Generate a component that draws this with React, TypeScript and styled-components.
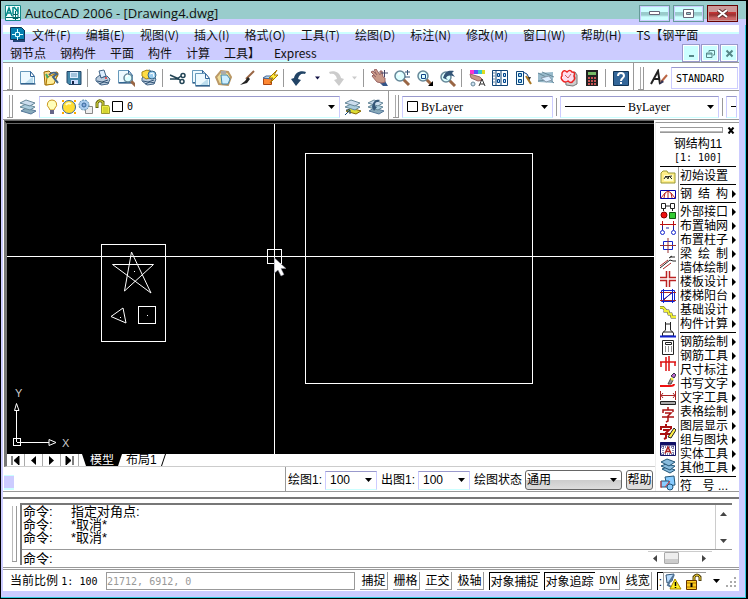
import React from 'react';
import styled, { createGlobalStyle } from 'styled-components';

const UI = "'Open Sans', 'Noto Sans CJK SC', sans-serif";
const SONG = "'Liberation Sans', 'Noto Sans CJK SC', sans-serif";
const FIXED = "'DejaVu Sans Mono', 'Noto Sans CJK SC', monospace";

const GlobalStyle = createGlobalStyle`
  * { box-sizing: border-box; }
  body { margin: 0; background: #000; overflow: hidden; }
  button, select, input { margin: 0; padding: 0; font: inherit; color: inherit; border: 0; background: none; border-radius: 0; }
  svg { display: block; flex: none; }
`;

/* ---------- window frame ---------- */
const Frame = styled.div`
  display: flex;
  flex-direction: column;
  height: 100vh;
  border: 1px solid #000;
  border-right-width: 2px;
  background: #ccccff;
  box-shadow: inset -1px -1px 0 #33ccdd;
  font: 12px/14px ${SONG};
  color: #000;
`;
const TitleBar = styled.header`
  display: flex;
  align-items: center;
  gap: 4px;
  height: 24px;
  flex: none;
  padding: 0 8px 0 4px;
  background: linear-gradient(#99cccc 18px, #ccccff 18px);
`;
const TitleText = styled.h1`
  flex: 1;
  margin: 0;
  font: 400 13px/18px ${UI};
  color: #111;
`;
const WindowButtons = styled.div`
  display: flex;
  gap: 3px;
`;
const WindowButton = styled.button<{ $close?: boolean }>`
  display: flex;
  align-items: center;
  justify-content: center;
  width: 31px;
  height: 17px;
  border: 1px solid ${p => (p.$close ? '#660000' : '#669999')};
  background: ${p => p.$close
    ? 'linear-gradient(#cc9999 6px, #cc3333 6px, #993333 9px, #cc6666 12px)'
    : 'linear-gradient(#ccffff 6px, #99cccc 6px, #99cccc 9px, #ccffff 11px)'};
  box-shadow: inset 0 0 0 1px ${p => (p.$close ? '#cc9999' : '#ccccff')};
`;
const Content = styled.main`
  display: flex;
  flex-direction: column;
  flex: 1;
  min-height: 0;
  margin: 0 7px 7px 2px;
  background: #fff;
`;

/* ---------- menu ---------- */
const MenuArea = styled.nav`
  flex: none;
  padding: 1px 0 0 7px;
  background: linear-gradient(#fff 7px, #ccffff 7px, #ccffff 9px, #ccccff 9px, #ccccff 35px, #ccffff 35px);
  border-bottom: 1px solid #999;
  font: 12px/18px 'Noto Sans CJK SC', sans-serif;
  color: #111;
`;
const MenuRow = styled.div<{ $wide?: boolean }>`
  display: flex;
  align-items: center;
  gap: ${p => (p.$wide ? '15px' : '14px')};
  height: 18px;
  white-space: nowrap;
`;
const MenuButton = styled.button<{ $first?: boolean }>`
  flex: none;
  margin-left: ${p => (p.$first ? '-9px' : '0')};
`;
const MdiButtons = styled.div`
  display: flex;
  gap: 1px;
  margin-left: auto;
  padding-right: 1px;
`;
const MdiButton = styled.button`
  display: flex;
  align-items: center;
  justify-content: center;
  width: 18px;
  height: 18px;
  border: 1px solid #9999cc;
  box-shadow: inset 0 0 0 1px #fff;
  background: #ccffff;
`;

/* ---------- toolbars ---------- */
const ToolbarRow = styled.div<{ $short?: boolean }>`
  display: flex;
  flex: none;
  height: ${p => (p.$short ? '28px' : '29px')};
  overflow: hidden;
  font: 10px/14px ${FIXED};
`;
const Toolbar = styled.div<{ $grow?: boolean }>`
  display: flex;
  align-items: center;
  flex: ${p => (p.$grow ? '1 1 0' : 'none')};
  min-width: 0;
  padding: 3px 1px 0 3px;
  border-right: ${p => (p.$grow ? '0' : '1px solid #999')};
  border-bottom: 1px solid #999;
`;
const Grip = styled.span`
  flex: none;
  width: 6px;
  height: 23px;
  margin: 0 3px 0 1px;
  border: solid #999;
  border-width: 0 1px 1px 0;
  background: linear-gradient(90deg, transparent 2px, #aaa 2px, #aaa 3px, transparent 3px);
`;
const ToolButton = styled.button<{ $narrow?: boolean }>`
  display: flex;
  align-items: center;
  justify-content: center;
  flex: none;
  width: ${p => (p.$narrow ? '14px' : '23px')};
  height: 22px;
`;
const Separator = styled.span`
  flex: none;
  width: 1px;
  height: 18px;
  margin: 0 3px 0 2px;
  background: #999;
`;
const Combo = styled.label<{ $width?: number }>`
  display: flex;
  align-items: center;
  position: relative;
  flex: ${p => (p.$width ? `0 0 ${p.$width}px` : '1 1 0')};
  min-width: 0;
  height: 22px;
  padding-left: 4px;
  margin: 0 1px 0 0;
  gap: 3px;
  border: 1px solid #ccccff;
  border-top-color: #9999cc;
  border-bottom-color: #ccffff;
  overflow: hidden;
`;
const SmallCombo = styled(Combo)`
  height: 19px;
  font: 12px/16px ${SONG};
`;
const PlainSelect = styled.select<{ $serif?: boolean }>`
  appearance: none;
  flex: 1;
  min-width: 0;
  outline: 0;
  ${p => (p.$serif ? "font: 12px/16px 'Liberation Serif', serif;" : '')}
`;
const Caret = styled.svg`
  position: absolute;
  right: 4px;
  pointer-events: none;
`;
const StyleInput = styled.input`
  flex: 1 1 0;
  min-width: 0;
  height: 22px;
  margin-left: 1px;
  padding-left: 4px;
  border: 1px solid #ccccff;
  border-top-color: #9999cc;
`;
const LayerButton = styled.button`
  display: flex;
  align-items: center;
  gap: 1px;
  flex: 1;
  text-align: left;
`;
const LayerName = styled.span`
  margin-left: 3px;
`;

/* ---------- work area ---------- */
const WorkArea = styled.section`
  display: grid;
  grid-template-columns: 1fr 84px;
  flex: 1;
  min-height: 0;
  border-bottom: 1px solid #999;
`;
const DrawingColumn = styled.div`
  display: flex;
  flex-direction: column;
  min-width: 0;
  min-height: 0;
`;
const Viewport = styled.div`
  position: relative;
  flex: 1;
  min-height: 0;
  margin: 0 1px 0 1px;
  border-top: 4px double #666;
  border-left: 3px solid #777;
  background: #000;
  overflow: hidden;
`;
const UcsIcon = styled.svg`
  position: absolute;
  left: 0;
  bottom: 0;
`;
const TabStrip = styled.div`
  display: flex;
  flex: none;
  height: 13px;
  margin-left: 1px;
  border-left: 3px solid #777;
  border-bottom: 1px solid #ccc;
  overflow: hidden;
`;
const TabNav = styled.button`
  display: flex;
  align-items: center;
  justify-content: center;
  width: 18px;
  border-right: 1px solid #aaa;
`;
const SheetTab = styled.button<{ $active?: boolean }>`
  height: 12px;
  margin-left: ${p => (p.$active ? '3px' : '0')};
  padding: 0 ${p => (p.$active ? '8px' : '4px')};
  line-height: 12px;
  color: ${p => (p.$active ? '#fff' : '#000')};
  background: ${p => (p.$active ? '#000' : 'none')};
  clip-path: ${p => (p.$active ? 'polygon(0 0, 100% 0, calc(100% - 4px) 100%, 4px 100%)' : 'none')};
`;
const DrawBar = styled.div`
  display: flex;
  justify-content: space-between;
  flex: none;
  height: 24px;
`;
const ScrollStub = styled.span`
  width: 10px;
  height: 15px;
  margin: 8px 0 0 1px;
  background: #ccccff;
  border: solid #ccffff;
  border-width: 1px 0 2px;
`;
const ScaleControls = styled.div`
  display: flex;
  align-items: center;
  gap: 3px;
  padding: 2px 2px 0 2px;
  border-left: 1px solid #999;
  white-space: nowrap;
`;
const ModeCombo = styled(Combo)`
  height: 20px;
  padding-left: 1px;
  border: 1px solid #666;
  border-radius: 3px;
  background: linear-gradient(#fff 9px, #ccc 9px, #ddd);
  font: 12px/16px ${SONG};
`;
const HelpButton = styled.button`
  height: 20px;
  width: 27px;
  border: 1px solid #666;
  border-radius: 3px;
  background: linear-gradient(#fff 9px, #ddd 9px);
`;

/* ---------- side panel ---------- */
const SidePanel = styled.aside`
  display: flex;
  flex-direction: column;
  min-height: 0;
  margin-top: 2px;
  padding: 0 3px 0 4px;
  border-top: 1px solid #999;
  border-left: 1px solid #eee;
  overflow: hidden;
`;
const PanelGrip = styled.div`
  display: flex;
  align-items: center;
  gap: 4px;
  height: 14px;
  flex: none;
`;
const GripLines = styled.span`
  flex: 1;
  height: 6px;
  border: solid #999;
  border-width: 1px 1px 1px 0;
  background: linear-gradient(transparent 3px, #bbb 3px);
`;
const PanelTitle = styled.div`
  flex: none;
  height: 30px;
  text-align: center;
  line-height: 14px;
  border-bottom: 1px solid #000;
`;
const PanelScale = styled.div`
  font: 10px/14px ${FIXED};
`;
const PanelBody = styled.div`
  display: grid;
  grid-template-columns: 18px 1fr;
  flex: 1;
  min-height: 0;
`;
const IconStrip = styled.div`
  display: flex;
  flex-direction: column;
  gap: 1px;
  padding-top: 2px;
`;
const StripButton = styled.button`
  flex: none;
  width: 16px;
  height: 16px;
`;
const PanelMenu = styled.div`
  border-left: 1px solid #999;
  padding-left: 1px;
  padding-top: 2px;
`;
const PanelItem = styled.button`
  display: flex;
  align-items: center;
  justify-content: space-between;
  width: 100%;
  height: 14px;
  line-height: 14px;
`;
const PanelLabel = styled.span`
  width: 48px;
  text-align: justify;
  text-align-last: justify;
  white-space: nowrap;
`;
const PanelRule = styled.div`
  height: 1px;
  margin: 1px 0 2px;
  background: #000;
`;

/* ---------- command window ---------- */
const CommandArea = styled.section`
  display: flex;
  flex: none;
  height: 71px;
  margin-top: 5px;
  padding: 4px 7px 0 9px;
  border-top: 2px solid #777;
  border-bottom: 1px solid #999;
`;
const CommandGrip = styled.span`
  width: 5px;
  height: 56px;
  margin: 3px 3px 0 0;
  border: solid #999;
  border-width: 0 1px 1px 0;
  background: linear-gradient(90deg, #bbb 1px, transparent 1px);
`;
const CommandBox = styled.div`
  display: flex;
  flex-direction: column;
  flex: 1;
  height: 62px;
  border-top: 2px solid #777;
  border-left: 2px solid #777;
  font: 13px/13px ${SONG};
`;
const CommandLog = styled.div`
  display: flex;
  justify-content: space-between;
  flex: none;
  height: 45px;
  border-bottom: 1px solid #999;
`;
const LogLines = styled.div`
  padding-left: 1px;
`;
const CommandLine = styled.div`
  display: grid;
  grid-template-columns: 48px 1fr;
  height: 13px;
`;
const VerticalScroll = styled.div`
  display: flex;
  flex-direction: column;
  justify-content: space-between;
  width: 17px;
  padding: 7px 0 6px 4px;
  border-left: 1px solid #ccc;
`;
const CommandEntry = styled.label`
  display: flex;
  padding: 2px 0 0 1px;
`;
const CommandInput = styled.input`
  flex: 1;
  min-width: 0;
  height: 13px;
  outline: 0;
`;
const HorizontalScroll = styled.div`
  display: flex;
  align-items: center;
  gap: 7px;
  width: 64px;
  height: 13px;
  margin: -1px 20px 0 0;
  padding-left: 5px;
  border-top: 1px solid #ccc;
`;
const ScrollThumb = styled.span`
  width: 15px;
  height: 12px;
  margin-right: 16px;
  border: 1px solid #aaa;
  border-radius: 1px;
  background: linear-gradient(#eee 6px, #ccc 6px);
`;

/* ---------- status bar ---------- */
const StatusBar = styled.footer`
  display: flex;
  align-items: center;
  flex: none;
  height: 22px;
  margin-top: 1px;
  padding: 1px 1px 0 7px;
  border-top: 1px solid #999;
  white-space: nowrap;
`;
const ScaleText = styled.span`
  width: 96px;
`;
const FixedText = styled.span`
  font: 10px/14px ${FIXED};
`;
const Coordinates = styled.input`
  flex: 1 1 0;
  min-width: 0;
  height: 18px;
  margin-right: 5px;
  border: 1px solid #999;
  color: #999;
  font: 10px/14px ${FIXED};
`;
const Toggle = styled.button<{ $on?: boolean; $fixed?: boolean }>`
  height: 18px;
  padding: 0 1px;
  margin-right: ${p => (p.$on ? '4px' : '5px')};
  border: solid ${p => (p.$on ? '#000' : '#999')};
  border-width: ${p => (p.$on ? '1px 0 0 1px' : '0 1px 1px 0')};
  ${p => (p.$fixed ? `font: 10px/14px ${FIXED};` : '')}
`;
const MoreToggle = styled(Toggle)`
  margin-right: 0;
`;
const Tray = styled.div`
  display: flex;
  align-items: center;
  gap: 3px;
  height: 18px;
  width: 43px;
  margin-right: 7px;
  border-left: 1px solid #999;
  border-top: 1px solid #999;
`;

/* ---------- drawings ---------- */
const Svg = ({ s = 18, children }: { s?: number; children: React.ReactNode }) => (
  <svg width={s} height={s} viewBox={`0 0 ${s} ${s}`} fill="none" aria-hidden="true">{children}</svg>
);
const Down = ({ w = 7, color = '#000' }: { w?: number; color?: string }) => (
  <svg width={w} height="4" viewBox="0 0 7 4" aria-hidden="true"><path d="M0 0h7L3.5 4z" fill={color} /></svg>
);
const ComboCaret = () => (
  <Caret width="7" height="4" viewBox="0 0 7 4" aria-hidden="true"><path d="M0 0h7L3.5 4z" fill="#000" /></Caret>
);
const Page = ({ x = 1, y = 2 }: { x?: number; y?: number }) => (
  <g transform={`translate(${x} ${y})`}>
    <path d="M.5.5h10l4 5v7H.5z" fill="#eefaff" stroke="#6699bb" />
    <path d="M5 12L13 5.500V12z" fill="#bde" />
    <path d="M10.500.5v5h4z" fill="#fff" stroke="#369" />
    <path d="M.5 13h15" stroke="#036" />
  </g>
);
const Layers = ({ yellow }: { yellow?: boolean }) => (
  <g stroke="#668899">
    <path d="M2 13l5-3 10 3-5 3z" fill={yellow ? '#dd3' : '#8ab'} stroke={yellow ? '#886600' : '#579'} />
    <path d="M1 9l6-3 9 3-5 3z" fill="#acd" />
    <path d="M1 5l6-3 9 3-5 3z" fill="#cde" />
  </g>
);
const Printer = () => (
  <g>
    <path d="M5 2l5-1 2 6-5 2z" fill="#def" stroke="#468" />
    <path d="M2 9l4-3 1 3 6-2 3 3-2 5-7 1-5-4z" fill="#bcd" stroke="#446688" />
    <path d="M3 12l5 1 6-2M5 15l5-2 5 1" stroke="#357" />
    <circle cx="12" cy="9" r="1" fill="#d33" />
  </g>
);
const Lens = ({ x = 7, y = 7, r = 5 }: { x?: number; y?: number; r?: number }) => (
  <g>
    <path d={`M${x + 3} ${y + 3}l6 6`} stroke="#964" strokeWidth="3" />
    <circle cx={x} cy={y} r={r} fill="#dff" stroke="#668899" strokeWidth="1.500" />
    <path d={`M${x - 2} ${y - 1}l2-2`} stroke="#fff" strokeWidth="2" />
  </g>
);

const icons: Record<string, React.ReactNode> = {
  New: <Page />,
  Open: <g><path d="M2 3l5-1 2 2 6-1 1 3-5 9-8 1z" fill="#fd8" stroke="#986600" /><path d="M5 8l11-4-4 11-8 1z" fill="#fe9" stroke="#a70" /><path d="M7 6c3-3 5-3 8-1l-4 3 5 6" stroke="#468" strokeWidth="2" /><path d="M4 5l2 4" stroke="#4a6" strokeWidth="2" /></g>,
  Save: <g><path d="M2 2.500h14v13H4l-2-2z" fill="#48a" stroke="#246" /><path d="M5 3h8v6H5z" fill="#def" /><path d="M6 5h6M6 7h6" stroke="#69b" /><path d="M6 11h7v4H6z" fill="#cdf" /><path d="M7 12h2v3H7z" fill="#124" /></g>,
  Plot: <Printer />,
  Preview: <g><Page y={1} x={1} /><Lens x={11} y={9} r={4} /></g>,
  Publish: <g><Printer /><path d="M2 3l5-2 4 2-1 6-4 1-4-3z" fill="#fd4" stroke="#a81" /><circle cx="12" cy="6" r="4" fill="#9ce" stroke="#368" /><path d="M10 5l3-1 1 4" stroke="#fff" /></g>,
  Cut: <g stroke="#245" strokeWidth="1.500"><path d="M1 6l9 4M1 10h9" /><circle cx="14" cy="6.500" r="2" /><circle cx="13" cy="12.500" r="2" /><path d="M8 10l4-3M8 9l3 2" /></g>,
  Copy: <g><Page x={0} y={1} /><Page x={3} y={4} /></g>,
  Paste: <g><path d="M6 2l7 1 3 5-3 8-9-1-3-7z" fill="#ed9" stroke="#b96" strokeWidth="2" /><path d="M6 6h6l3 4-2 5H7z" fill="#cef" stroke="#48a" /><path d="M6 2h5v3H6z" fill="#aaa" /></g>,
  Match: <g><path d="M16 2L8 10" stroke="#964" strokeWidth="2" /><path d="M10 8l-3 4-5 4 7-2 3-4z" fill="#222" /></g>,
  Block: <g><path d="M2.500 9.500h8v6h-8z" fill="#f83" stroke="#a41" /><path d="M2 9l3-2h8l-2 3z" fill="#bde" stroke="#469" /><path d="M16 1l-8 8h4l-3 5 8-8h-4z" fill="#fe4" stroke="#a70" /></g>,
  Undo: <path d="M1 10l3-1C5 4 10 1 16 3l-1 2c-4-1-6 1-7 5l3 1-5 6z" fill="#246" />,
  Redo: <path d="M17 10l-3-1C13 4 8 1 2 3l1 2c4-1 6 1 7 5l-3 1 5 6z" fill="#ccc" />,
  Pan: <g><path d="M12 11l3 1 3 5h-5l-3-3z" fill="#358" /><path d="M1 3l2-1 4 4-3-5 2-1 4 6 0-4 2 0 1 6 2 1v4l-3 1-5-1-5-6 1-1 3 2z" fill="#c99988" stroke="#966" /><path d="M11 4h7M14.500 1v7" stroke="#446" /></g>,
  Zoom: <g><Lens x={7} y={7} /><path d="M12 3h5M14.500 1v5M12 8h5" stroke="#357" /></g>,
  ZoomWindow: <g><Lens x={7} y={7} /><path d="M5.500 5.500h4v4h-4z" stroke="#148" /><path d="M17 12v5h-5z" fill="#000" /></g>,
  ZoomPrevious: <g><Lens x={7} y={8} /><path d="M4 9C6 2 10 1 15 2l-2 2 3 4c-5-2-7-2-9 1l2 2z" fill="#357" /></g>,
  Properties: <g><path d="M2 1h4v4H2z" fill="#f3c" /><path d="M6 1h4v4H6z" fill="#55f" /><path d="M10 1h4v4h-4z" fill="#3cc" /><path d="M14 1h3v4h-3z" fill="#dd2" /><path d="M2 5l10 3 3 3-5 1-7-3z" fill="#c99988" stroke="#966" /><circle cx="5" cy="15" r="2" fill="#cde" stroke="#689" /><path d="M11 17l3-7 3 7M12 15h4" stroke="#333" /></g>,
  DesignCenter: <g><path d="M1.500 1.500h15v15h-15z" fill="#fff" stroke="#147" /><path d="M5 2v14M10 2v14" stroke="#147" /><path d="M6.500 4.500h2v3h-2zM6.500 10.500h2v3h-2zM12.500 4.500h2v3h-2zM12.500 10.500h2v3h-2z" fill="#bdf" stroke="#048" /><path d="M3 3v12" stroke="#68a" strokeDasharray="2 1" /></g>,
  ToolPalettes: <g><path d="M2.500 2.500h7v13h-7z" fill="#eff" stroke="#147" /><path d="M4.500 4.500h3v3h-3zM4.500 10.500h3v3h-3z" fill="#9ce" stroke="#048" /><path d="M9 3q5 1 6 6" stroke="#148" /><path d="M12 8h5l-2 4z" fill="#333" /><path d="M12 7l5 8" stroke="#a72" strokeWidth="2" /></g>,
  SheetSet: <g><path d="M1 4l15-1v11L1 13z" fill="#9bc" /><path d="M1 4l10 5 6 5M5 3l12 5M1 12l10-1" stroke="#689" /><path d="M4 9l8-2 3 4-6 2z" fill="#def" stroke="#89a" /></g>,
  Markup: <g><path d="M5 5l10-2 2 3v9l-4 2-7-1z" fill="#ccc" stroke="#777" /><path d="M3 3h10v10H3z" fill="#fde" /><path d="M2 4q2-4 5-1 3-3 5 0 4 0 2 4 2 3-1 5-2 3-5 0-3 2-5 0-3-3-1-5z" stroke="#e22" strokeWidth="1.500" /><path d="M5 6l3 3 3-4" stroke="#c66" /></g>,
  QuickCalc: <g><path d="M3 1h12v16H3z" fill="#222" /><path d="M5 3h8v3H5z" fill="#7b6" /><path d="M5 9h8M5 12h8M5 15h8" stroke="#f66" strokeWidth="1.500" strokeDasharray="2 1" /></g>,
  Help: <g><path d="M1.500 2.500h15v14h-15z" fill="#369" stroke="#135" /><path d="M6 7c0-4 6-4 6 0 0 2-3 2-3 5" stroke="#fff" strokeWidth="2" /><path d="M8 13h2v2H8z" fill="#fff" /></g>,
  TextStyle: <g><path d="M1 15L8 2l2 13M4 10h6" stroke="#222" strokeWidth="2" /><path d="M17 6l-6 7" stroke="#b64" strokeWidth="2" /><path d="M12 11l-3 5 5-3z" fill="#335" /></g>,
  Layers: <Layers />,
  MakeCurrent: <g><Layers yellow /><path d="M1 17l5-5M2 12h4v4" stroke="#147" /></g>,
  LayerPrevious: <g><Layers /><path d="M5 9c1-6 4-8 8-7l-2 2c-3 0-3 2-3 4l2 1-3 4z" fill="#357" /></g>,
};

const Bulb = () => <Svg s={16}><path d="M8 1a4.500 4.500 0 0 0-3 8l1 2h4l1-2a4.500 4.500 0 0 0-3-8z" fill="#ffb" stroke="#c92" /><path d="M6 12h4M6 14h4" stroke="#668" strokeWidth="2" /></Svg>;
const Sun = () => <Svg s={16}><circle cx="8" cy="8" r="6.500" fill="#fd3" stroke="#369" /><path d="M5 6q2-3 5-1" stroke="#ffc" strokeWidth="2" /><path d="M1 1h2v2H1zM13 1h2v2h-2zM1 13h2v2H1zM13 13h2v2h-2z" fill="#fa0" /></Svg>;
const Freeze = () => <Svg s={16}><path d="M7.500 7.500h7v7h-7z" fill="#eee" stroke="#888" /><circle cx="6" cy="6" r="5" fill="#ace" stroke="#58a" strokeDasharray="2 1" /><circle cx="6" cy="6" r="2" fill="#8ad" stroke="#369" /></Svg>;
const Padlock = () => <Svg s={16}><path d="M2 9V4q2-4 6-1v4" stroke="#661" strokeWidth="3" /><path d="M2 8V4q2-4 6-1v3" stroke="#ee4" /><path d="M6.500 6.500h7l1 2v6h-8z" fill="#ee4" stroke="#993" /><path d="M8 9h5M8 11h5M8 13h5" stroke="#bb2" /></Svg>;
const Swatch = () => <svg width="11" height="11" aria-hidden="true"><path d="M.5.5h10v10H.5z" fill="#fff" stroke="#000" /></svg>;

const stripIcons: [string, React.ReactNode][] = [
  ['初始设置', <g><path d="M1 4l2-2h4l1 2h7v10H1z" fill="#fe8" stroke="#993" /><path d="M4 6h9v6H4z" fill="#ffc" /><path d="M4 10l2-3 2 3 1-3 3 3M5 8l7-1" stroke="#222" /></g>],
  ['钢结构', <g><path d="M.5 4.500h15v8H.5z" fill="#fff" stroke="#00a" /><path d="M1 12l4-5 3-2 3 2 4 5M8 5v7M5 7l-1 5M11 7l1 5" stroke="#b22" /></g>],
  ['外部接口', <g><path d="M1.500.5h4v5h-4zM10.500.5h4v5h-4zM3.500 6v2M12.500 6v2M6 3h4" fill="#fff" stroke="#222" /><circle cx="4" cy="12" r="3" fill="#e11" stroke="#800" /><path d="M9.500 9.500h6v6h-6z" fill="#3c3" stroke="#151" /></g>],
  ['布置轴网', <g><path d="M0 4.500h16M2.500 1v8M13.500 1v8" stroke="#b11" /><path d="M2.500 6v4M13.500 6v4M6 8h3" stroke="#229" /><circle cx="2.500" cy="12.500" r="2" stroke="#12c" /><circle cx="13.500" cy="12.500" r="2" stroke="#12c" /></g>],
  ['布置柱子', <g><path d="M3.500 4.500h9v8h-9z" stroke="#12c" /><path d="M0 8.500h16M8 1v15" stroke="#933" /></g>],
  ['梁绘制', <g stroke="#222"><path d="M0 12l8-6M3 15l8-6" stroke="#a22" /><path d="M0 14l10-8 3 1h3M9 4l3-2M10 3h5" /></g>],
  ['墙体绘制', <g stroke="#b22"><path d="M0 6.500h6.500V0M9.500 0v6.500H16M16 9.500H9.500V16M6.500 16V9.500H0" strokeWidth="1.500" /></g>],
  ['楼板设计', <g><path d="M1.500 2.500h13v11h-13z" stroke="#12c" /><path d="M0 4.500h16M0 12.500h16M4 12l8-8" stroke="#a22" /><path d="M3.500 1v14M12.500 1v14M4 11l8-6" stroke="#12c" /></g>],
  ['楼梯', <g><path d="M0 2.500h3l2 2v1.500h3l1 3h2l1 3h4" stroke="#553" strokeWidth="3" /><path d="M0 2.500h3l2 2v1.500h3l1 3h2l1 3h4" stroke="#ee3" strokeWidth="2" /></g>],
  ['基础', <g stroke="#222"><path d="M5.500 0v8l-3 3v3h11v-3l-3-3V0M5 2h6M3 10h10" /><path d="M0 14.500h16" stroke="#12c" strokeWidth="2" /></g>],
  ['计算', <g stroke="#222"><path d="M2.500 1.500h11v14h-11zM5.500 3.500h6v2h-6z" /><path d="M5 8h7M5 10h7M5 12h7" strokeDasharray="1 2" /></g>],
  ['钢筋', <g stroke="#d11" strokeWidth="1.500"><path d="M0 6h16M1 6v5M15 6v4M6 1v14M9 0v15" /></g>],
  ['标注', <g><path d="M0 13h10q4 0 4-2" stroke="#e11" strokeWidth="2" /><path d="M8 11l3-6 2 2-2 4z" fill="#999" stroke="#444" /><path d="M11 3l3-3 2 2-2 3z" fill="#b6c" stroke="#334" /><path d="M11 5l2 2" stroke="#ee3" strokeWidth="2" /></g>],
  ['尺寸', <g><path d="M.5 1v9M15.500 1v9M1 5.500h14" stroke="#a22" /><path d="M3 3L1 5.500l2 2.500M13 3l2 2.500-2 2.500" stroke="#a22" /><path d="M.5 11.500h15v3H.5z" fill="#aaa" stroke="#222" /></g>],
  ['文字', <g stroke="#a11" strokeWidth="1.500"><path d="M8 0v3M3 6V3h10v2M5 6h6l-3 3v5l-2 1M2 10h12" /></g>],
  ['文字编辑', <g><path d="M6 0v3M1 6V3h10v2M3 6h6l-3 3v5l-2 1M0 10h12" stroke="#a11" strokeWidth="2" /><path d="M8 13l6-9 2 2-5 8z" fill="#fe4" stroke="#222" /></g>],
  ['图层显示', <g><path d="M.5 1.500h15v13H.5z" fill="#fff" stroke="#116" /><path d="M0 3h16" stroke="#116" strokeWidth="3" /><path d="M3 5v9M13 5v9M1 6h14M1 13h14" stroke="#116" strokeDasharray="1 1" /><path d="M5 12.500L8 6l3 6.500M6 10.500h4" stroke="#a22" strokeWidth="1.500" /></g>],
  ['图层', <g fill="#8bd" stroke="#257"><path d="M2 11l5-2 8 3-5 3z" /><path d="M1 8l5-2 9 2-5 4z" /><path d="M1 4l6-3 8 3-6 4z" /></g>],
  ['图块', <g fill="#8cf" stroke="#257"><path d="M5 2l9-1 1 9-8 1z" /><path d="M1 6h8v6H1z" /><circle cx="10" cy="12" r="3" /><path d="M1 6v7M5 12l5-6" stroke="#d33" fill="none" /></g>],
];

const ToolSet = ({ names }: { names: string[] }) => (
  <>
    {names.map((n, i) =>
      n === '|' ? <Separator key={i} /> :
      n === 'v' || n === 'g' ? <ToolButton key={i} $narrow aria-label="History"><Down w={5} color={n === 'v' ? '#114' : '#ccc'} /></ToolButton> :
      <ToolButton key={i} aria-label={n}><Svg>{icons[n]}</Svg></ToolButton>
    )}
  </>
);

const menus1 = ['文件(F)', '编辑(E)', '视图(V)', '插入(I)', '格式(O)', '工具(T)', '绘图(D)', '标注(N)', '修改(M)', '窗口(W)', '帮助(H)', 'TS【钢平面'];
const menus2 = ['钢节点', '钢构件', '平面', '构件', '计算', '工具】', 'Express'];
const standardTools = ['New', 'Open', 'Save', '|', 'Plot', 'Preview', 'Publish', '|', 'Cut', 'Copy', 'Paste', 'Match', 'Block', '|', 'Undo', 'v', 'Redo', 'g', '|', 'Pan', 'Zoom', 'ZoomWindow', 'ZoomPrevious', '|', 'Properties', 'DesignCenter', 'ToolPalettes', 'SheetSet', 'Markup', 'QuickCalc', '|', 'Help'];
const panelGroups = [
  ['初始设置'],
  ['钢 结 构'],
  ['外部接口', '布置轴网', '布置柱子', '梁 绘 制', '墙体绘制', '楼板设计', '楼梯阳台', '基础设计', '构件计算'],
  ['钢筋绘制', '钢筋工具', '尺寸标注', '书写文字', '文字工具', '表格绘制', '图层显示', '组与图块', '实体工具', '其他工具'],
  ['符 号...'],
];
const tabArrows = ['M1 0v9M8 0v9L3 4.500z', 'M7 0v9L2 4.500z', 'M2 0v9l5-4.500z', 'M8 0v9M1 0v9l5-4.500z'];

const Drawing = () => (
  <svg width="100%" height="100%" stroke="#fff" fill="none" aria-label="Drawing4">
    <g shapeRendering="crispEdges">
      <path d="M298.500 29.500h227v230h-227zM94.500 120.500h64v97h-64zM260.500 125.500h14v14h-14zM131.500 182.500h17v17h-17z" />
      <line x1="0" y1="132.500" x2="100%" y2="132.500" />
      <line x1="267.500" y1="0" x2="267.500" y2="100%" />
      <path d="M127 147.500h1M140 191.500h1M113 193.500h1" />
    </g>
    <path d="M124.500 128l19.500 41-38.500-28.500h41L117.500 167z" />
    <path d="M104 192.500l12-8.500 3 15z" />
    <path d="M267.500 134v15l3.500-3 3 6 3-1.500-3-6h5z" fill="#fff" stroke="#889" strokeWidth=".5" />
  </svg>
);

export default function App() {
  return (
    <>
      <GlobalStyle />
      <Frame>
        <TitleBar>
          <Svg s={16}>
            <path d="M0 0h16v16H0z" fill="#f4ffff" /><path d="M.5.5h15v15H.5z" stroke="#188" />
            <path d="M1 11L4 3l3 8M2.500 8h4M8 2v7M13 2v7M9 2l4 5" stroke="#088" strokeWidth="1.500" />
            <path d="M1 12.500h14M10.500 6v9M8 9.500h5v4H8z" stroke="#066" />
          </Svg>
          <TitleText>AutoCAD 2006 - [Drawing4.dwg]</TitleText>
          <WindowButtons>
            <WindowButton aria-label="Minimize"><svg width="11" height="5"><path d="M.5.5h10v3H.5z" fill="#fff" stroke="#667" /></svg></WindowButton>
            <WindowButton aria-label="Maximize"><svg width="11" height="9"><path d="M.5.5h10v8H.5z" fill="#fff" stroke="#667" /><path d="M3.500 3.500h4v2h-4z" fill="#9cc" stroke="#667" /></svg></WindowButton>
            <WindowButton $close aria-label="Close"><svg width="11" height="9"><path d="M1 1l9 7M10 1L1 8" stroke="#633" strokeWidth="4" /><path d="M1 1l9 7M10 1L1 8" stroke="#fff" strokeWidth="2" /></svg></WindowButton>
          </WindowButtons>
        </TitleBar>

        <Content>
          <MenuArea>
            <MenuRow $wide>
              <Svg s={16}>
                <path d="M3 3h12v12H3z" fill="#247" /><path d="M.5.5h11l3 3v9H.5z" fill="#047fb0" stroke="#135" />
                <path d="M2 7.500h3M9 7.500h4M7.500 2v3M7.500 10v3M5.500 5.500h4v4h-4z" stroke="#dff" />
              </Svg>
              {menus1.map((m, i) => <MenuButton key={m} $first={i === 0}>{m}</MenuButton>)}
            </MenuRow>
            <MenuRow>
              {menus2.map(m => <MenuButton key={m}>{m}</MenuButton>)}
              <MdiButtons>
                <MdiButton aria-label="Minimize drawing"><svg width="9" height="9"><path d="M2 7h5" stroke="#588" strokeWidth="2" /></svg></MdiButton>
                <MdiButton aria-label="Restore drawing"><svg width="9" height="9" fill="none" stroke="#588"><path d="M3 3V1.500h5.500V6H7M.5 4h5.500v4.500H.5zM.5 5h5.500" /></svg></MdiButton>
                <MdiButton aria-label="Close drawing"><svg width="9" height="9"><path d="M1.500 1.500l6 6M7.500 1.500l-6 6" stroke="#588" strokeWidth="2" /></svg></MdiButton>
              </MdiButtons>
            </MenuRow>
          </MenuArea>

          <ToolbarRow $short>
            <Toolbar>
              <Grip />
              <ToolSet names={standardTools} />
            </Toolbar>
            <Toolbar $grow>
              <Grip />
              <ToolSet names={['TextStyle']} />
              <StyleInput aria-label="Text style" defaultValue="STANDARD" />
            </Toolbar>
          </ToolbarRow>

          <ToolbarRow>
            <Toolbar>
              <Grip />
              <ToolSet names={['Layers']} />
              <Combo as="div" $width={301}>
                <LayerButton aria-haspopup="listbox" aria-label="Layer 0">
                  <Bulb /><Sun /><Freeze /><Padlock /><Swatch /><LayerName>0</LayerName>
                </LayerButton>
                <ComboCaret />
              </Combo>
              <ToolSet names={['MakeCurrent', 'LayerPrevious']} />
            </Toolbar>
            <Toolbar $grow>
              <Grip />
              <Combo $width={151}>
                <Swatch />
                <PlainSelect $serif aria-label="Color"><option>ByLayer</option></PlainSelect>
                <ComboCaret />
              </Combo>
              <Separator />
              <Combo $width={159}>
                <svg width="60" height="1"><path d="M0 .5h60" stroke="#000" /></svg>
                <PlainSelect $serif aria-label="Linetype"><option>ByLayer</option></PlainSelect>
                <ComboCaret />
              </Combo>
              <Separator />
              <Combo as="div"><svg width="10" height="1"><path d="M0 .5h10" stroke="#000" /></svg></Combo>
            </Toolbar>
          </ToolbarRow>

          <WorkArea>
            <DrawingColumn>
              <Viewport>
                <Drawing />
                <UcsIcon width="70" height="70" stroke="#fff" fill="none" aria-hidden="true">
                  <path d="M6.500 54.500h7v7h-7zM9.500 58V27M10 58.500h32" shapeRendering="crispEdges" />
                  <path d="M7.500 26.500l2-7 2.500 7zM42 55.500l7 3-7 3z" />
                  <text x="8" y="13" fill="#ccc" stroke="none" fontFamily="Liberation Sans" fontSize="11">Y</text>
                  <text x="55" y="63" fill="#ccc" stroke="none" fontFamily="Liberation Sans" fontSize="11">X</text>
                </UcsIcon>
              </Viewport>
              <TabStrip>
                {tabArrows.map((d, i) => (
                  <TabNav key={d} aria-label={['First', 'Previous', 'Next', 'Last'][i]}>
                    <svg width="9" height="9"><path d={d} fill="#000" stroke={i % 3 === 0 ? '#000' : 'none'} /></svg>
                  </TabNav>
                ))}
                <SheetTab $active>模型</SheetTab>
                <SheetTab>布局1</SheetTab>
                <svg width="5" height="12"><path d="M4.500 0L.5 12" stroke="#000" /></svg>
              </TabStrip>
              <DrawBar>
                <ScrollStub />
                <ScaleControls>
                  <label htmlFor="draw-scale">绘图1:</label>
                  <SmallCombo as="div" $width={52}>
                    <PlainSelect id="draw-scale"><option>100</option></PlainSelect><ComboCaret />
                  </SmallCombo>
                  <label htmlFor="plot-scale">出图1:</label>
                  <SmallCombo as="div" $width={52}>
                    <PlainSelect id="plot-scale"><option>100</option></PlainSelect><ComboCaret />
                  </SmallCombo>
                  <label htmlFor="draw-mode">绘图状态</label>
                  <ModeCombo as="div" $width={97}>
                    <PlainSelect id="draw-mode"><option>通用</option></PlainSelect><ComboCaret />
                  </ModeCombo>
                  <HelpButton>帮助</HelpButton>
                </ScaleControls>
              </DrawBar>
            </DrawingColumn>

            <SidePanel>
              <PanelGrip>
                <GripLines />
                <button aria-label="Close panel"><svg width="9" height="7"><path d="M1.500.5l5 6M6.500.5l-5 6" stroke="#000" strokeWidth="2" /></svg></button>
              </PanelGrip>
              <PanelTitle>钢结构11<PanelScale>[1: 100]</PanelScale></PanelTitle>
              <PanelBody>
                <IconStrip>
                  {stripIcons.map(([name, art]) => <StripButton key={name} aria-label={name}><Svg s={16}>{art}</Svg></StripButton>)}
                </IconStrip>
                <PanelMenu>
                  {panelGroups.map((group, g) => (
                    <React.Fragment key={g}>
                      {g > 0 && <PanelRule />}
                      {group.map(item => (
                        <PanelItem key={item}>
                          <PanelLabel>{item}</PanelLabel>
                          {g > 0 && g < 4 && <svg width="4" height="8"><path d="M0 0l4 4-4 4z" /></svg>}
                        </PanelItem>
                      ))}
                    </React.Fragment>
                  ))}
                </PanelMenu>
              </PanelBody>
            </SidePanel>
          </WorkArea>

          <CommandArea>
            <CommandGrip />
            <CommandBox>
              <CommandLog>
                <LogLines>
                  <CommandLine><span>命令:</span><span>指定对角点:</span></CommandLine>
                  <CommandLine><span>命令:</span><span>*取消*</span></CommandLine>
                  <CommandLine><span>命令:</span><span>*取消*</span></CommandLine>
                </LogLines>
                <VerticalScroll>
                  <svg width="7" height="4"><path d="M0 4h7L3.500 0z" fill="#444" /></svg>
                  <Down color="#444" />
                </VerticalScroll>
              </CommandLog>
              <CommandEntry>
                命令:
                <CommandInput aria-label="命令" />
                <HorizontalScroll>
                  <svg width="4" height="7"><path d="M4 0v7L0 3.500z" fill="#444" /></svg>
                  <ScrollThumb />
                  <svg width="4" height="7"><path d="M0 0v7l4-3.500z" fill="#444" /></svg>
                </HorizontalScroll>
              </CommandEntry>
            </CommandBox>
          </CommandArea>

          <StatusBar>
            <ScaleText>当前比例 <FixedText>1: 100</FixedText></ScaleText>
            <Coordinates aria-label="Coordinates" readOnly value="21712, 6912, 0" />
            <Toggle>捕捉</Toggle>
            <Toggle>栅格</Toggle>
            <Toggle>正交</Toggle>
            <Toggle>极轴</Toggle>
            <Toggle $on>对象捕捉</Toggle>
            <Toggle $on>对象追踪</Toggle>
            <Toggle $fixed>DYN</Toggle>
            <Toggle>线宽</Toggle>
            <MoreToggle $on aria-label="More">:</MoreToggle>
            <Tray>
              <Svg s={18}><path d="M2 2l8-1-2 7-5 2z" fill="#bdf" stroke="#357" /><path d="M10 2L6 8l-2 4 5 3" stroke="#579" strokeWidth="2" /><path d="M11 6l6 10H6z" fill="#fe2" stroke="#a80" /><path d="M11.500 9v4M11.500 14v1" stroke="#000" strokeWidth="1.500" /></Svg>
              <Svg s={18}><path d="M9 8V4q3-4 6 0v4" stroke="#541" strokeWidth="3" /><path d="M9 8V4q3-4 6 0v3" stroke="#fd3" /><path d="M1.500 7.500h10v9h-10z" fill="#fc2" stroke="#630" /><path d="M2 10h9M2 14h9" stroke="#a70" /><path d="M6.500 10v4" stroke="#000" strokeWidth="2" /></Svg>
            </Tray>
            <button aria-label="Status bar menu"><Down /></button>
            <Svg s={18}><path d="M14 6h2M10 10h2M14 10h2M6 14h2M10 14h2M14 14h2" stroke="#aaa" strokeWidth="2" /></Svg>
          </StatusBar>
        </Content>
      </Frame>
    </>
  );
}
